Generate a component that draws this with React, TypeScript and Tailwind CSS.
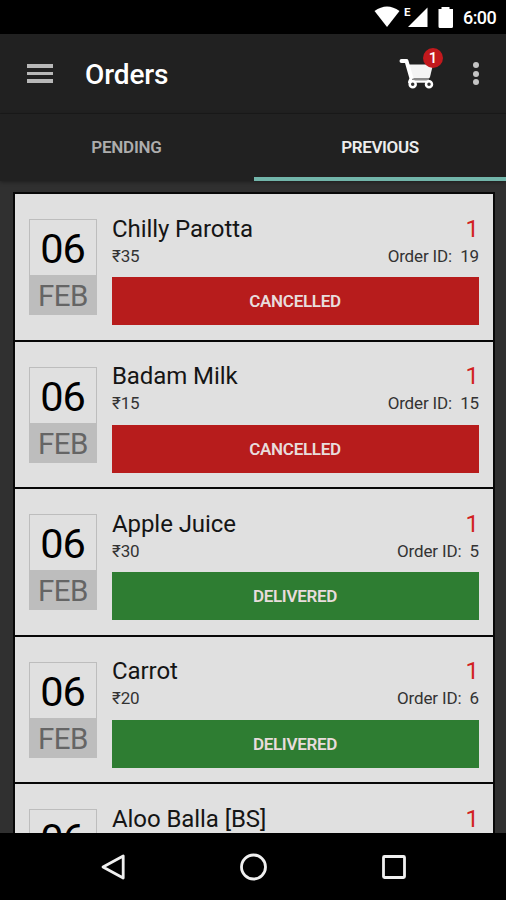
const orders = [
  { name: 'Chilly Parotta', price: '₹35', id: '19', status: 'CANCELLED' },
  { name: 'Badam Milk', price: '₹15', id: '15', status: 'CANCELLED' },
  { name: 'Apple Juice', price: '₹30', id: '5', status: 'DELIVERED' },
  { name: 'Carrot', price: '₹20', id: '6', status: 'DELIVERED' },
  { name: 'Aloo Balla [BS]', price: '₹25', id: '7', status: 'DELIVERED' },
];

type Order = (typeof orders)[number];

function StatusBar() {
  return (
    <div className="flex h-[34px] shrink-0 items-center bg-black pl-[374px]">
      <svg width="88" height="34" viewBox="0 0 88 34" fill="#fff" className="shrink-0">
        <path d="M.5 11Q13 2 25.500 11L13 27Z" />
        <path d="M53.500 7.500V27H34Z" />
        <path d="M67.500 7h8v2h3.500v17.500q0 1.500-1.500 1.500H66q-1.500 0-1.500-1.500V9h3Z" />
        <text x="30" y="16" fontFamily="Roboto, sans-serif" fontSize="11.500" fontWeight="700">E</text>
      </svg>
      <span className="pl-px pt-px text-[18px] font-medium leading-[34px] tracking-[-0.6px] text-white">6:00</span>
    </div>
  );
}

function Toolbar() {
  return (
    <header className="flex h-[80px] shrink-0 items-center border-b border-[#1b1b1b] bg-[#212121]">
      <div className="ml-[27px] flex w-[26px] flex-col gap-[4px]">
        <div className="h-[3.5px] bg-[#b8b8b8]" />
        <div className="h-[3.5px] bg-[#b8b8b8]" />
        <div className="h-[3.5px] bg-[#b8b8b8]" />
      </div>
      <h1 className="ml-[32px] pt-[2px] text-[28px] font-medium leading-8 tracking-[-0.1px] text-white">Orders</h1>
      <div className="relative ml-auto mr-[31px] h-[42px] w-[46px]">
        <svg width="46" height="42" viewBox="0 0 46 42" className="block">
          <path d="M11 11.500H37L34 24Q33.500 25.500 32 25.500H15Z" fill="#f4f4f4" />
          <path d="M5.500 8H10.500L15.500 25.500L14 29" fill="none" stroke="#fff" strokeWidth="4" strokeLinejoin="round" strokeLinecap="round" />
          <path d="M16 26.500H33" stroke="#8b8b8b" strokeWidth="1.500" />
          <path d="M14 28.500H34" stroke="#fff" strokeWidth="2.400" />
          <circle cx="16.700" cy="31.200" r="3" fill="#333" stroke="#fff" strokeWidth="2.500" />
          <circle cx="33" cy="31.200" r="3" fill="#333" stroke="#fff" strokeWidth="2.500" />
        </svg>
        <span className="absolute left-[27px] top-[-4.5px] flex size-5 items-center justify-center rounded-full bg-[#c3191d] text-[15px] font-medium text-white">1</span>
      </div>
      <div className="mr-[27px] flex flex-col gap-[2.5px]">
        <div className="size-[6px] rounded-full bg-[#c4c4c4]" />
        <div className="size-[6px] rounded-full bg-[#c4c4c4]" />
        <div className="size-[6px] rounded-full bg-[#c4c4c4]" />
      </div>
    </header>
  );
}

function Tabs() {
  return (
    <nav className="grid h-[67px] shrink-0 grid-cols-2 bg-[#212121] text-center text-[17px] font-semibold leading-[67px] shadow-[0_1px_4px_rgba(0,0,0,0.4)]">
      <div className="h-[67px] tracking-[-0.25px] text-[#adadad]">PENDING</div>
      <div className="ml-px h-[67px] border-b-4 border-[#72b5aa] tracking-[-0.4px] text-[#ededed]">PREVIOUS</div>
    </nav>
  );
}

function OrderRow({ order }: { order: Order }) {
  return (
    <article className="flex h-[147.6px] shrink-0 border-b-2 border-[#080808] bg-[#e0e0e0] px-[14px]">
      <div className="mt-[25px] h-[96px] w-[68px] shrink-0 text-center">
        <div className="h-[56px] border border-b-0 border-[#bdbdbd] pr-px text-[41.5px] leading-[57px] tracking-[-1px] text-black">06</div>
        <div className="h-[40px] bg-[#bdbdbd] text-[29.5px] leading-[43px] tracking-[-0.5px] text-[#656565]">FEB</div>
      </div>
      <div className="ml-[15px] flex-1 pt-[18.6px]">
        <div className="flex h-[32px] justify-between text-[24px] leading-[32px] tracking-[-0.08px] text-[#151515]">
          <span>{order.name}</span>
          <span className="text-[#d21f22]">1</span>
        </div>
        <div className="flex h-[22px] justify-between text-[17px] leading-[22px] tracking-[-0.15px] text-[#333]">
          <span>{order.price}</span>
          <span className="whitespace-pre">Order ID:  {order.id}</span>
        </div>
        <div
          className={`mt-[10.4px] h-[48px] pr-px text-center text-[17px] font-semibold leading-[49.4px] tracking-[-0.3px] text-[#e8dcdc] ${
            order.status === 'CANCELLED' ? 'bg-[#b71c1c]' : 'bg-[#2e7d32]'
          }`}
        >
          {order.status}
        </div>
      </div>
    </article>
  );
}

function NavigationBar() {
  return (
    <footer className="flex h-[67px] shrink-0 items-center justify-between bg-black px-[98px]">
      <svg width="30" height="30" viewBox="0 0 30 30" fill="none" stroke="#f0f0f0" strokeWidth="2.800">
        <path d="M25.200 4V26L5 15Z" strokeLinejoin="round" />
      </svg>
      <svg width="30" height="30" viewBox="0 0 30 30" fill="none" stroke="#f0f0f0" strokeWidth="2.800">
        <circle cx="15.500" cy="15" r="12" />
      </svg>
      <svg width="30" height="30" viewBox="0 0 30 30" fill="none" stroke="#f0f0f0" strokeWidth="2.800">
        <rect x="5.500" y="4.500" width="21" height="21" rx="1" />
      </svg>
    </footer>
  );
}

export default function App() {
  return (
    <div className="flex h-[900px] w-[506px] flex-col overflow-hidden bg-[#303030] font-['Roboto',sans-serif]">
      <StatusBar />
      <Toolbar />
      <Tabs />
      <main className="min-h-0 flex-1 overflow-hidden pl-[13px] pr-[11px] pt-[11px]">
        <div className="flex flex-col border-x-2 border-t-2 border-[#080808]">
          {orders.map((order) => (
            <OrderRow key={order.name} order={order} />
          ))}
        </div>
      </main>
      <NavigationBar />
    </div>
  );
}
